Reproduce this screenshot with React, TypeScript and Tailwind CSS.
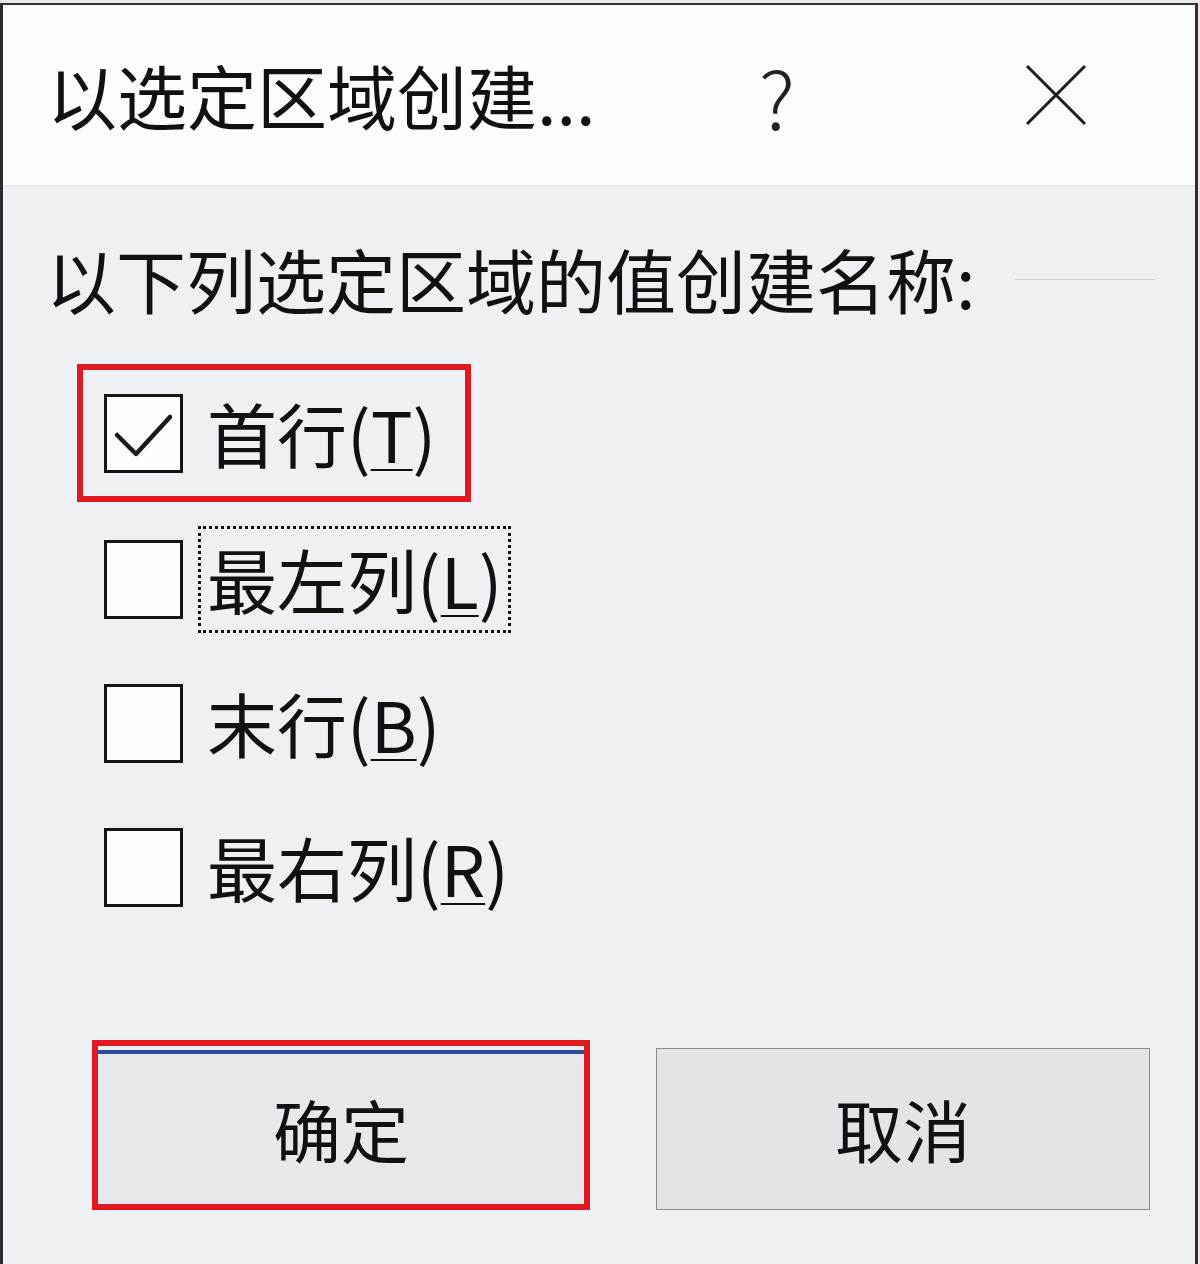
const font = { fontFamily: '"Noto Sans CJK SC", "Noto Sans", sans-serif' };

function Box({ checked }: { checked?: boolean }) {
  return (
    <div className="w-[79px] h-[79px] shrink-0 border-[3px] border-[#151515] bg-[#fdfdfe]">
      {checked && (
        <svg width="73" height="73" viewBox="0 0 73 73">
          <polyline
            points="10,38 29,57 63,20"
            fill="none"
            stroke="#1a1a1a"
            strokeWidth="4.5"
            strokeLinecap="round"
            strokeLinejoin="round"
          />
        </svg>
      )}
    </div>
  );
}

function Label({ name, hotkey }: { name: string; hotkey: string }) {
  return (
    <span className="text-[70px] leading-[70px] text-[#111]">
      {name}(<u className="underline-offset-[6px] decoration-2">{hotkey}</u>)
    </span>
  );
}

export default function App() {
  return (
    <div
      className="w-[1200px] h-[1264px] bg-[#e9e9ea] pt-[3px] pr-[2px]"
      style={font}
    >
      <div className="h-full flex flex-col border-t-2 border-l-[3px] border-r-[3px] border-t-[#333] border-l-[#2a2a33] border-r-[#3b2833]">
        {/* title bar */}
        <div className="h-[181px] shrink-0 flex items-center pl-[44px] bg-[#fbfcfe] border-b border-[#e2e4e7]">
          <span className="w-[700px] text-[70px] leading-[70px] text-[#111]">
            以选定区域创建...
          </span>
          <span className="w-[60px] text-center text-[80px] leading-[70px] font-light text-[#222]">
            ?
          </span>
          <svg className="ml-[218px]" width="62" height="62" viewBox="0 0 62 62">
            <path d="M2 2 L60 60 M60 2 L2 60" stroke="#1c1c1c" strokeWidth="3" />
          </svg>
        </div>

        {/* body */}
        <div className="flex-1 bg-[#eef0f3] pt-[58px]">
          <div className="flex items-center pl-[43px]">
            <span className="text-[70px] leading-[70px] text-[#111]">
              以下列选定区域的值创建名称:
            </span>
            <div className="flex-1 h-px bg-[#c9cdd2] ml-[40px] mr-[40px]" />
          </div>

          <div className="mt-[49px] flex flex-col">
            <div className="h-[144px] flex items-center pb-[4px]">
              <div className="ml-[74px] w-[394px] h-[138px] border-[6px] border-[#e0181f] flex items-center pl-[21px]">
                <Box checked />
                <div className="ml-[24px]">
                  <Label name="首行" hotkey="T" />
                </div>
              </div>
            </div>

            <div className="h-[144px] flex items-center pl-[101px]">
              <Box />
              <div className="ml-[15px] h-[107px] px-[6px] flex items-center border-[3px] border-dotted border-[#111]">
                <Label name="最左列" hotkey="L" />
              </div>
            </div>

            <div className="h-[144px] flex items-center pl-[101px]">
              <Box />
              <div className="ml-[24px]">
                <Label name="末行" hotkey="B" />
              </div>
            </div>

            <div className="h-[144px] flex items-center pl-[101px]">
              <Box />
              <div className="ml-[24px]">
                <Label name="最右列" hotkey="R" />
              </div>
            </div>
          </div>

          {/* buttons */}
          <div className="mt-[101px] flex items-end">
            <div className="ml-[89px] w-[498px] h-[170px] border-[6px] border-[#e0181f] bg-[#eceef1] pt-[4px] flex">
              <button className="flex-1 border-t-[4px] border-[#2f4b9e] bg-[#e6e8eb] flex items-center justify-center text-[68px] leading-[68px] text-[#111]">
                确定
              </button>
            </div>
            <button className="ml-[66px] w-[494px] h-[162px] border border-[#8a8b8d] bg-[#e2e4e7] flex items-center justify-center text-[68px] leading-[68px] text-[#111]">
              取消
            </button>
          </div>
        </div>
      </div>
    </div>
  );
}
